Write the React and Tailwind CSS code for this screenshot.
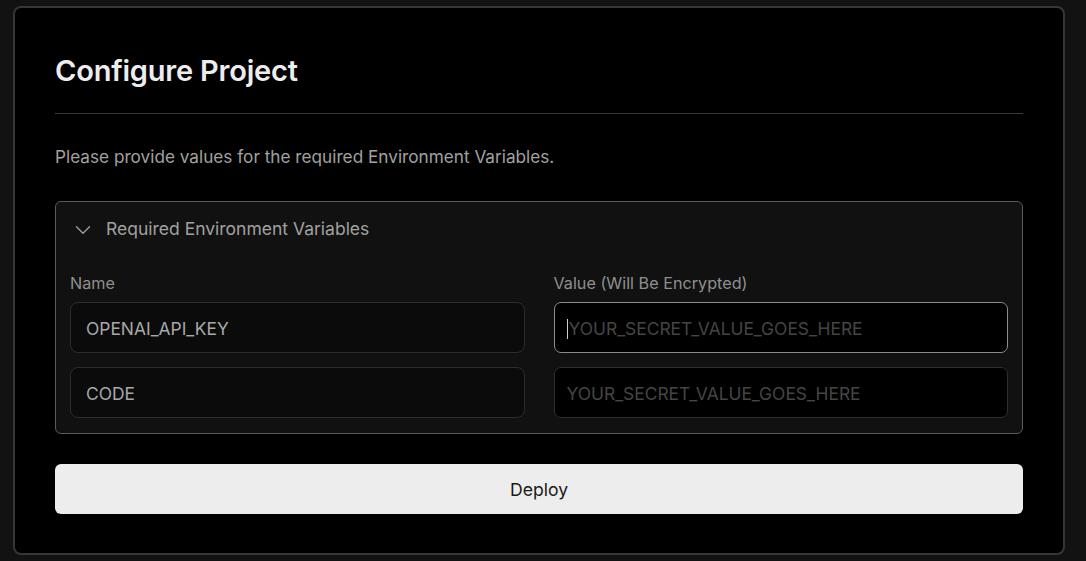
import { ChevronDown } from "lucide-react";

const vars = [
  { name: "OPENAI_API_KEY", focused: true },
  { name: "CODE", focused: false },
];

const App = () => {
  return (
    <div className="min-h-screen bg-[#121212] pt-[6px] pl-[13px] pr-[21px] pb-[6px] font-['Inter',sans-serif]">
      <div className="rounded-[8px] border-2 border-[#363636] bg-black px-[40px] pt-[45px] pb-[39px]">
        <h1 className="text-[29px] leading-[36px] font-semibold tracking-[-0.2px] text-[#ededed]">
          Configure Project
        </h1>
        <div className="mt-[24px] h-px bg-[#3a3a3a]" />

        <p className="mt-[31px] text-[17.2px] leading-[24px] text-[#a1a1a1]">
          Please provide values for the required Environment Variables.
        </p>

        <div className="mt-[32px] rounded-[6px] border border-[#5a5a5a] bg-[#111111]">
          <div className="flex h-[55px] items-center gap-[10px] pl-[14px]">
            <ChevronDown size={26} strokeWidth={1.2} className="text-[#a1a1a1]" />
            <span className="text-[17.5px] text-[#a1a1a1]">Required Environment Variables</span>
          </div>

          <div className="grid grid-cols-2 gap-x-[29px] px-[14px] pt-[16px] pb-[15px]">
            <label className="text-[16.2px] leading-[20px] text-[#8f8f8f]">Name</label>
            <label className="text-[16.2px] leading-[20px] text-[#8f8f8f]">Value (Will Be Encrypted)</label>

            {vars.map((v, i) => (
              <div key={v.name} className="contents">
                <div
                  className={`${i === 0 ? "mt-[9px]" : "mt-[14px]"} flex h-[51px] items-center rounded-[8px] border border-[#2c2c2c] bg-[#0b0b0b] pl-[15px] pt-[3px] text-[17.4px] text-[#a8a8a8]`}
                >
                  {v.name}
                </div>
                <div
                  className={`${i === 0 ? "mt-[9px]" : "mt-[14px]"} flex h-[51px] items-center rounded-[7px] border ${v.focused ? "border-[#8c8c8c]" : "border-[#2e2e2e]"} bg-black pl-[12px] pt-[3px] text-[17.4px] text-[#454545]`}
                >
                  {v.focused && <span className="mr-px h-[20px] w-px bg-[#d0d0d0]" />}
                  YOUR_SECRET_VALUE_GOES_HERE
                </div>
              </div>
            ))}
          </div>
        </div>

        <button className="mt-[30px] flex h-[50px] w-full items-center justify-center rounded-[6px] bg-[#ededed] pt-[2px] text-[17.6px] text-[#1a1a1a]">
          Deploy
        </button>
      </div>
    </div>
  );
};

export default App;
